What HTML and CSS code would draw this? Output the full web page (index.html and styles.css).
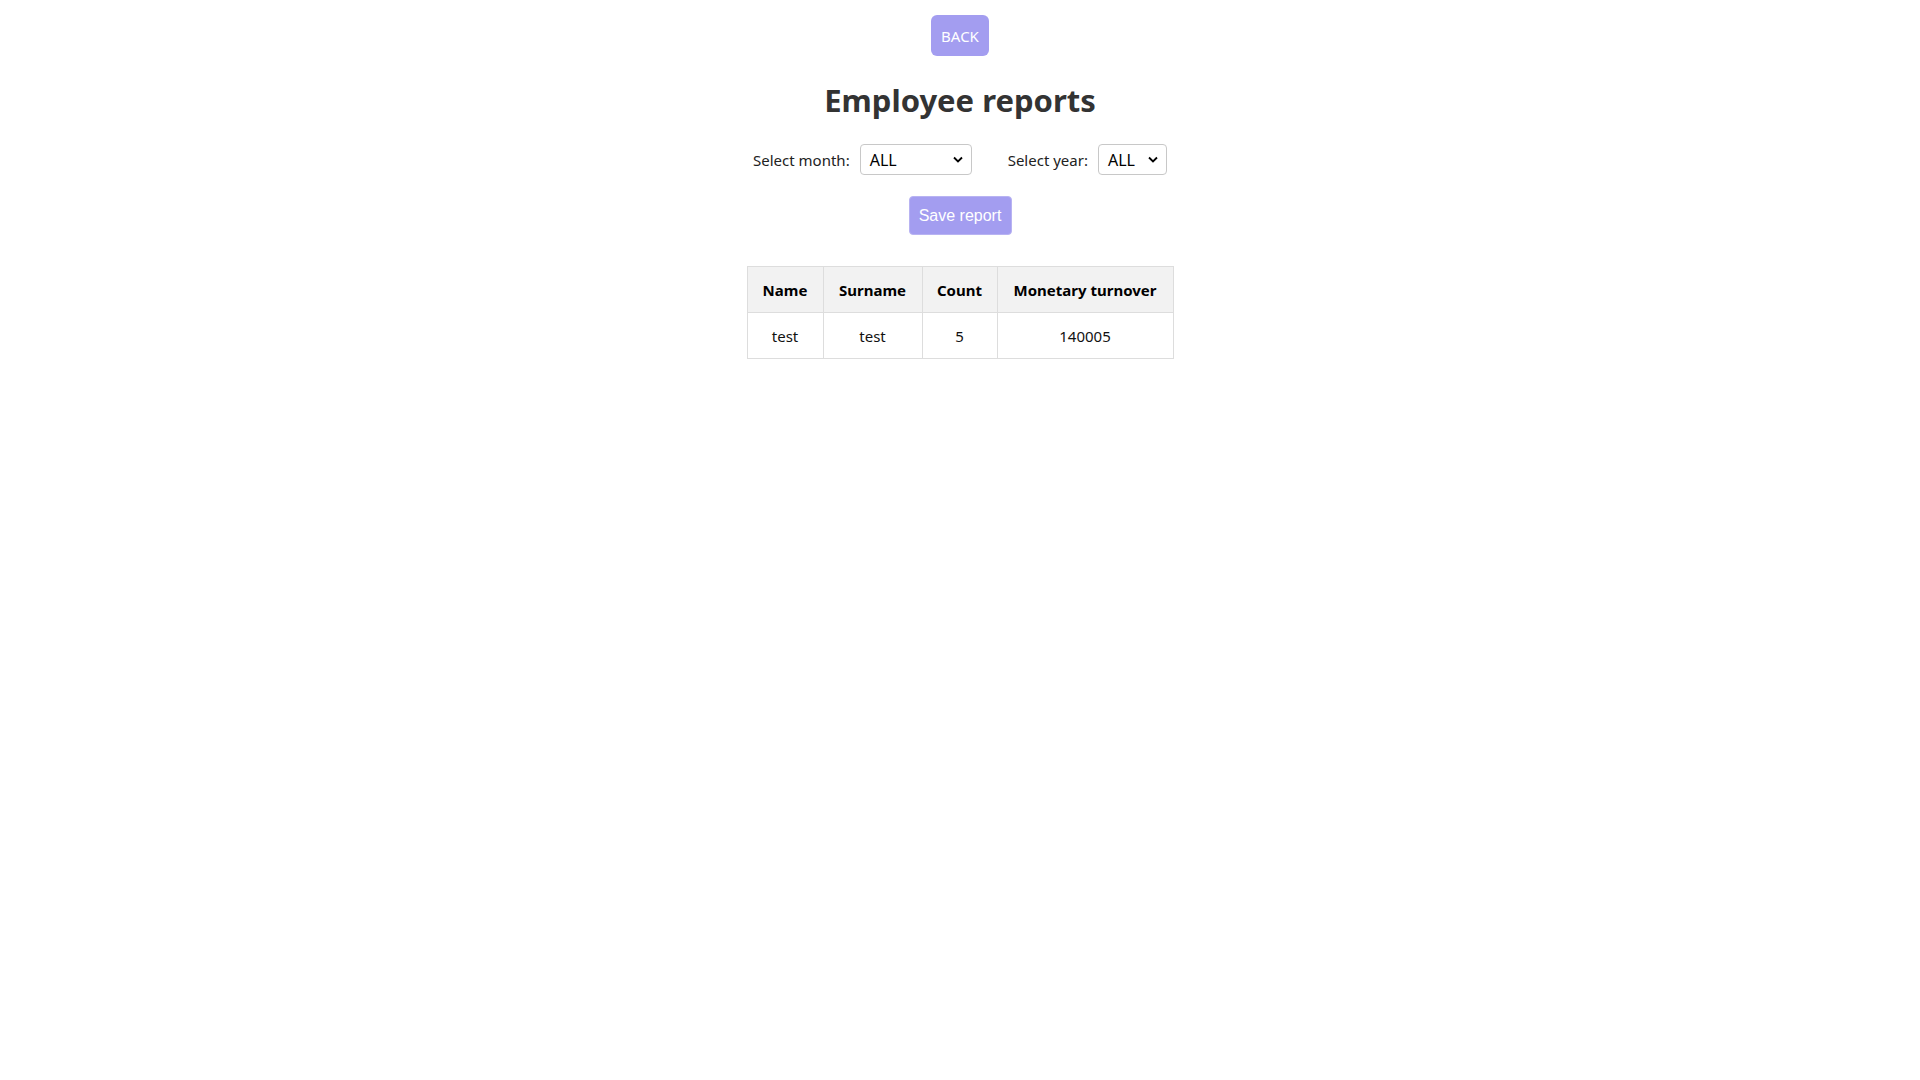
FILE: index.html
```html
<!DOCTYPE html>
<html>
<head>
<meta charset="utf-8">
<link rel="stylesheet" href="styles.css">
</head>
<body>
<div class="page">
  <button class="back-btn">BACK</button>
  <h1 class="title">Employee reports</h1>
  <div class="filters">
    <label class="filter">
      <span class="filter-label">Select month:</span>
      <span class="select select-month"><span class="select-value">ALL</span><svg class="chev" width="10" height="7" viewBox="0 0 10 7"><path d="M1 1.5 L5 5.5 L9 1.5" fill="none" stroke="#000" stroke-width="1.8"/></svg></span>
    </label>
    <label class="filter">
      <span class="filter-label">Select year:</span>
      <span class="select select-year"><span class="select-value">ALL</span><svg class="chev" width="10" height="7" viewBox="0 0 10 7"><path d="M1 1.5 L5 5.5 L9 1.5" fill="none" stroke="#000" stroke-width="1.8"/></svg></span>
    </label>
  </div>
  <button class="save-btn">Save report</button>
  <table class="report">
    <thead>
      <tr><th class="c1">Name</th><th class="c2">Surname</th><th class="c3">Count</th><th class="c4">Monetary turnover</th></tr>
    </thead>
    <tbody>
      <tr><td>test</td><td>test</td><td>5</td><td>140005</td></tr>
    </tbody>
  </table>
</div>
</body>
</html>
```
FILE: styles.css
```css
html, body {
  margin: 0;
  padding: 0;
  background: #fff;
}
body {
  font-family: "Segoe UI", "Noto Sans", "Open Sans", sans-serif;
  color: #222;
}
.page {
  display: flex;
  flex-direction: column;
  align-items: center;
  padding-top: 15px;
}
.back-btn {
  width: 58px;
  height: 41px;
  background: #a39df0;
  border: none;
  border-radius: 6px;
  color: #fff;
  font-family: "Segoe UI", "Noto Sans", sans-serif;
  font-size: 15px;
  padding: 0;
}
.title {
  margin: 24px 0 0;
  font-size: 31px;
  font-weight: 700;
  color: #333;
  line-height: 40px;
}
.filters {
  display: flex;
  gap: 36px;
  margin-top: 24px;
  height: 31px;
  align-items: center;
}
.filter {
  display: flex;
  align-items: center;
  gap: 10px;
  font-size: 15px;
  color: #222;
}
.select {
  box-sizing: border-box;
  height: 31px;
  border: 1px solid #c8c8c8;
  border-radius: 4px;
  display: flex;
  align-items: center;
  justify-content: space-between;
  padding: 0 8px 0 9px;
  font-size: 16px;
  color: #000;
  background: #fff;
}
.select-month { width: 112px; }
.select-year { width: 69px; }
.save-btn {
  margin-top: 21px;
  width: 103px;
  height: 39px;
  background: #a39df0;
  border: 1px solid #b8b3f2;
  border-radius: 4px;
  color: #fff;
  font-family: "Liberation Sans", Arial, sans-serif;
  font-size: 16px;
  padding: 0;
}
.report {
  margin-top: 31px;
  border-collapse: collapse;
  font-size: 15px;
}
.report th, .report td {
  border: 1px solid #ddd;
  height: 46px;
  padding: 0;
  text-align: center;
  box-sizing: border-box;
}
.report th {
  background: #f2f2f2;
  font-weight: 700;
  color: #000;
}
.report td { color: #111; }
.c1 { width: 76px; }
.c2 { width: 99px; }
.c3 { width: 75px; }
.c4 { width: 176px; }
```
